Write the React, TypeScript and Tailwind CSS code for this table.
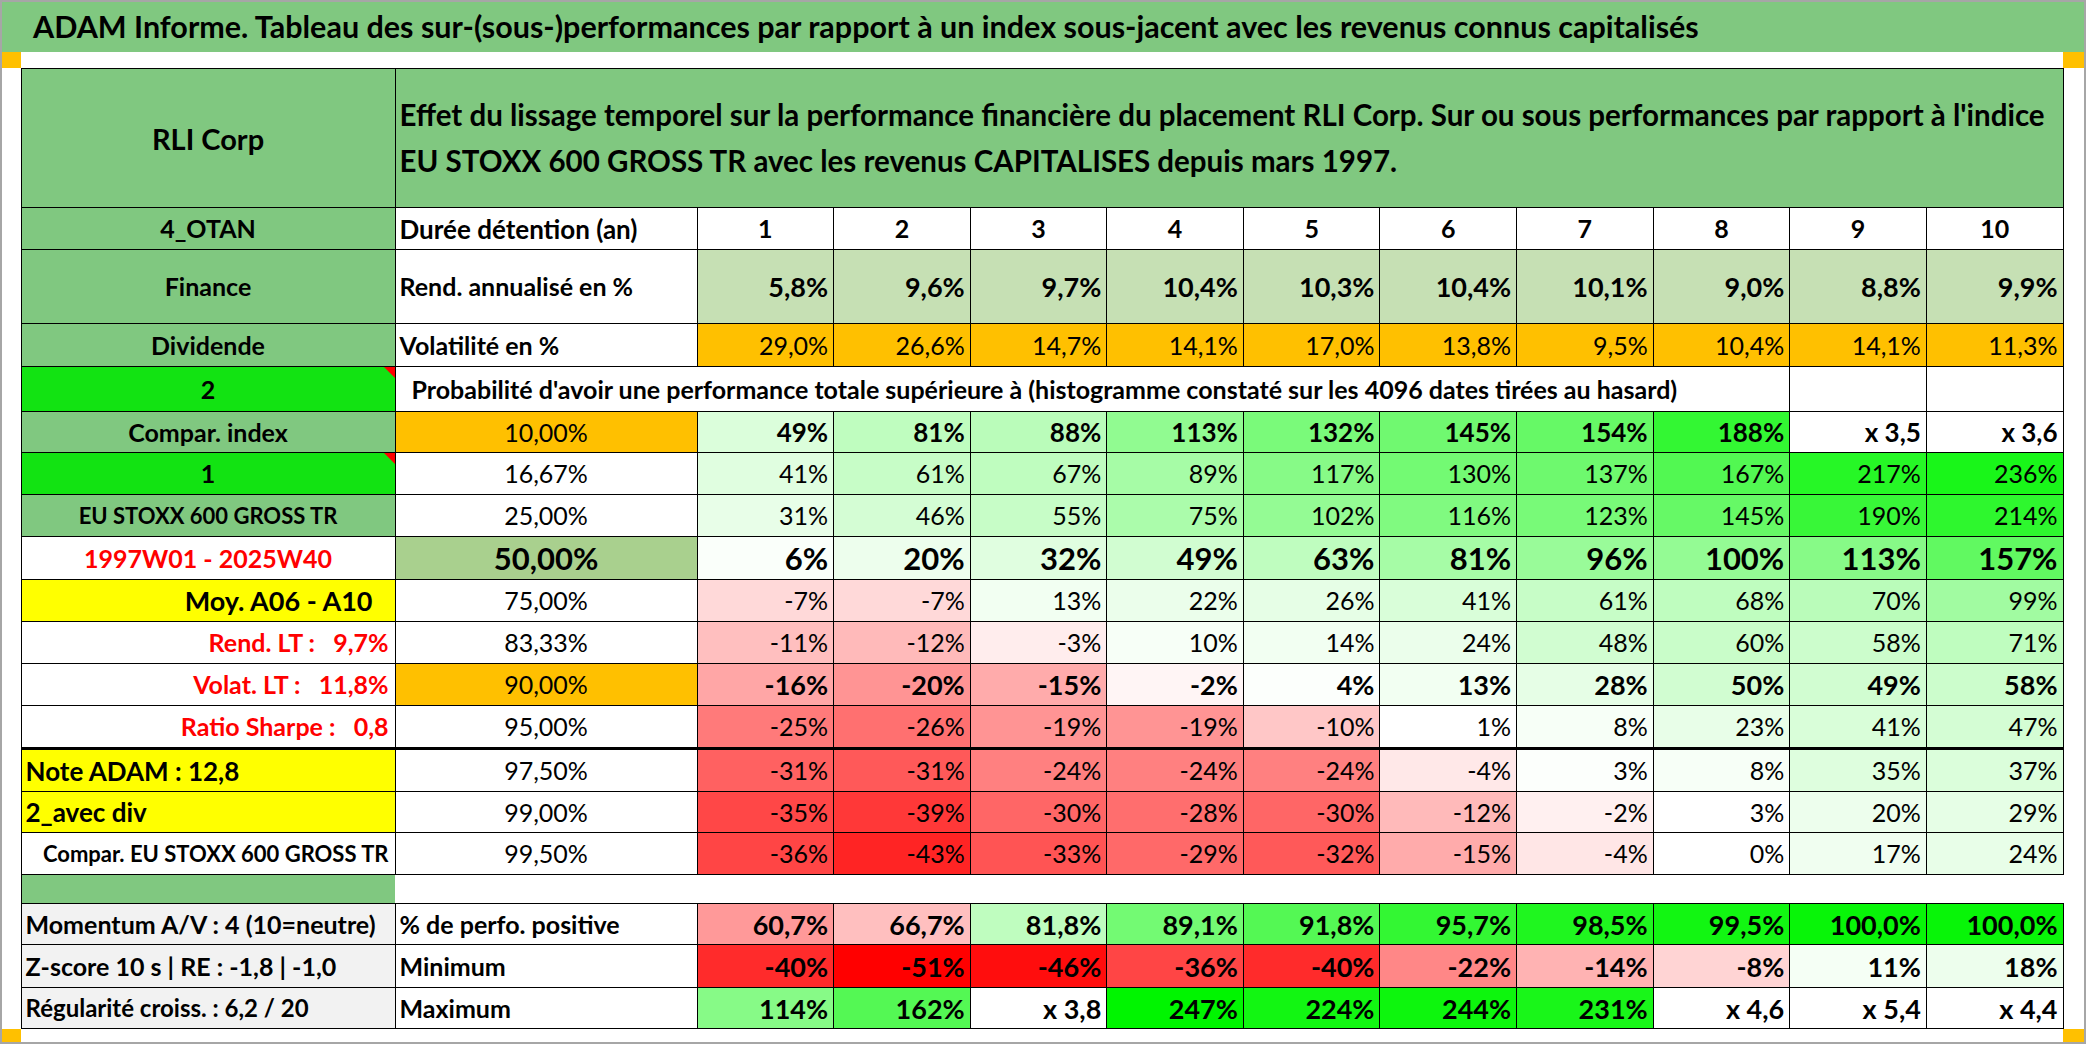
import React from "react"

type Cell = [string, number]

const heat = (s: number) => {
  if (s === 0) return "#ffffff"
  if (s > 0) {
    const v = Math.round(255 * (1 - s))
    const g = Math.round(255 - 10 * s)
    return `rgb(${v},${g},${v})`
  }
  const v = Math.round(255 * (1 + s))
  return `rgb(255,${v},${v})`
}

const rend = ["5,8%", "9,6%", "9,7%", "10,4%", "10,3%", "10,4%", "10,1%", "9,0%", "8,8%", "9,9%"]
const vol = ["29,0%", "26,6%", "14,7%", "14,1%", "17,0%", "13,8%", "9,5%", "10,4%", "14,1%", "11,3%"]

type Row = {
  a: string
  aCls: string
  b: string
  bCls: string
  vals: Cell[]
  vCls: string
  h: string
  tri?: boolean
  thick?: boolean
}

const rows: Row[] = [
  {
    a: "Compar. index",
    aCls: "bg-[#80c880] text-center font-bold text-[25px]",
    b: "10,00%",
    bCls: "bg-[#ffc000] text-center text-[25px]",
    vals: [["49%", 0.14], ["81%", 0.25], ["88%", 0.27], ["113%", 0.43], ["132%", 0.52], ["145%", 0.56], ["154%", 0.6], ["188%", 0.8], ["x 3,5", 0], ["x 3,6", 0]],
    vCls: "font-bold text-[26px]",
    h: "h-[41px]",
  },
  {
    a: "1",
    aCls: "bg-[#12e312] text-center font-bold text-[25px]",
    b: "16,67%",
    bCls: "bg-white text-center text-[25px]",
    vals: [["41%", 0.12], ["61%", 0.22], ["67%", 0.25], ["89%", 0.35], ["117%", 0.47], ["130%", 0.55], ["137%", 0.57], ["167%", 0.68], ["217%", 0.85], ["236%", 0.9]],
    vCls: "text-[25px]",
    h: "h-[42px]",
    tri: true,
  },
  {
    a: "EU STOXX 600 GROSS TR",
    aCls: "bg-[#80c880] text-center font-bold text-[22px]",
    b: "25,00%",
    bCls: "bg-white text-center text-[25px]",
    vals: [["31%", 0.09], ["46%", 0.17], ["55%", 0.22], ["75%", 0.33], ["102%", 0.42], ["116%", 0.5], ["123%", 0.53], ["145%", 0.6], ["190%", 0.78], ["214%", 0.82]],
    vCls: "text-[25px]",
    h: "h-[42px]",
  },
  {
    a: "1997W01 - 2025W40",
    aCls: "bg-white text-center font-bold text-[25px] text-[#ff0000]",
    b: "50,00%",
    bCls: "bg-[#a9d08e] text-center font-bold text-[31px]",
    vals: [["6%", 0.02], ["20%", 0.07], ["32%", 0.12], ["49%", 0.18], ["63%", 0.25], ["81%", 0.35], ["96%", 0.4], ["100%", 0.42], ["113%", 0.47], ["157%", 0.62]],
    vCls: "font-bold text-[31px]",
    h: "h-[43px]",
  },
  {
    a: "Moy. A06 - A10",
    aCls: "bg-[#ffff00] text-right pr-[22px] font-bold text-[27px]",
    b: "75,00%",
    bCls: "bg-white text-center text-[25px]",
    vals: [["-7%", -0.15], ["-7%", -0.15], ["13%", 0.05], ["22%", 0.08], ["26%", 0.1], ["41%", 0.15], ["61%", 0.22], ["68%", 0.25], ["70%", 0.27], ["99%", 0.37]],
    vCls: "text-[25px]",
    h: "h-[42px]",
  },
  {
    a: "Rend. LT :   9,7%",
    aCls: "bg-white text-right pr-[6px] font-bold text-[25px] text-[#ff0000] whitespace-pre",
    b: "83,33%",
    bCls: "bg-white text-center text-[25px]",
    vals: [["-11%", -0.25], ["-12%", -0.27], ["-3%", -0.07], ["10%", 0.03], ["14%", 0.05], ["24%", 0.08], ["48%", 0.18], ["60%", 0.21], ["58%", 0.2], ["71%", 0.25]],
    vCls: "text-[25px]",
    h: "h-[42px]",
  },
  {
    a: "Volat. LT :   11,8%",
    aCls: "bg-white text-right pr-[6px] font-bold text-[25px] text-[#ff0000] whitespace-pre",
    b: "90,00%",
    bCls: "bg-[#ffc000] text-center text-[25px]",
    vals: [["-16%", -0.35], ["-20%", -0.42], ["-15%", -0.33], ["-2%", -0.04], ["4%", 0.01], ["13%", 0.05], ["28%", 0.1], ["50%", 0.18], ["49%", 0.18], ["58%", 0.2]],
    vCls: "font-bold text-[27px]",
    h: "h-[42px]",
  },
  {
    a: "Ratio Sharpe :   0,8",
    aCls: "bg-white text-right pr-[6px] font-bold text-[25px] text-[#ff0000] whitespace-pre",
    b: "95,00%",
    bCls: "bg-white text-center text-[25px]",
    vals: [["-25%", -0.52], ["-26%", -0.56], ["-19%", -0.42], ["-19%", -0.42], ["-10%", -0.22], ["1%", 0], ["8%", 0.03], ["23%", 0.09], ["41%", 0.15], ["47%", 0.17]],
    vCls: "text-[25px]",
    h: "h-[43px]",
    thick: true,
  },
  {
    a: "Note ADAM : 12,8",
    aCls: "bg-[#ffff00] text-left pl-[4px] font-bold text-[26px]",
    b: "97,50%",
    bCls: "bg-white text-center text-[25px]",
    vals: [["-31%", -0.62], ["-31%", -0.65], ["-24%", -0.5], ["-24%", -0.5], ["-24%", -0.5], ["-4%", -0.09], ["3%", 0.01], ["8%", 0.03], ["35%", 0.13], ["37%", 0.14]],
    vCls: "text-[25px]",
    h: "h-[43px]",
  },
  {
    a: "2_avec div",
    aCls: "bg-[#ffff00] text-left pl-[4px] font-bold text-[26px]",
    b: "99,00%",
    bCls: "bg-white text-center text-[25px]",
    vals: [["-35%", -0.72], ["-39%", -0.78], ["-30%", -0.6], ["-28%", -0.57], ["-30%", -0.6], ["-12%", -0.27], ["-2%", -0.06], ["3%", 0], ["20%", 0.07], ["29%", 0.1]],
    vCls: "text-[25px]",
    h: "h-[41px]",
  },
  {
    a: "Compar. EU STOXX 600 GROSS TR",
    aCls: "bg-white text-right pr-[6px] font-bold text-[22px]",
    b: "99,50%",
    bCls: "bg-white text-center text-[25px]",
    vals: [["-36%", -0.73], ["-43%", -0.86], ["-33%", -0.67], ["-29%", -0.59], ["-32%", -0.65], ["-15%", -0.33], ["-4%", -0.1], ["0%", 0], ["17%", 0.06], ["24%", 0.09]],
    vCls: "text-[25px]",
    h: "h-[42px]",
  },
]

const bottom: Row[] = [
  {
    a: "Momentum A/V : 4 (10=neutre)",
    aCls: "bg-[#f2f2f2] text-left pl-[4px] font-bold text-[25px]",
    b: "% de perfo. positive",
    bCls: "bg-white text-left pl-[4px] font-bold text-[25px]",
    vals: [["60,7%", -0.4], ["66,7%", -0.25], ["81,8%", 0.25], ["89,1%", 0.55], ["91,8%", 0.67], ["95,7%", 0.8], ["98,5%", 0.88], ["99,5%", 0.93], ["100,0%", 0.97], ["100,0%", 0.97]],
    vCls: "font-bold text-[27px]",
    h: "h-[41px]",
  },
  {
    a: "Z-score 10 s | RE : -1,8 | -1,0",
    aCls: "bg-[#f2f2f2] text-left pl-[4px] font-bold text-[25px]",
    b: "Minimum",
    bCls: "bg-white text-left pl-[4px] font-bold text-[25px]",
    vals: [["-40%", -0.83], ["-51%", -1], ["-46%", -0.95], ["-36%", -0.73], ["-40%", -0.83], ["-22%", -0.47], ["-14%", -0.3], ["-8%", -0.17], ["11%", 0.04], ["18%", 0.07]],
    vCls: "font-bold text-[27px]",
    h: "h-[43px]",
  },
  {
    a: "Régularité croiss. : 6,2 / 20",
    aCls: "bg-[#f2f2f2] text-left pl-[4px] font-bold text-[24px]",
    b: "Maximum",
    bCls: "bg-white text-left pl-[4px] font-bold text-[25px]",
    vals: [["114%", 0.47], ["162%", 0.67], ["x 3,8", 0], ["247%", 1], ["224%", 0.93], ["244%", 0.95], ["231%", 0.9], ["x 4,6", 0], ["x 5,4", 0], ["x 4,4", 0]],
    vCls: "font-bold text-[27px]",
    h: "h-[41px]",
  },
]

const td = "border border-black p-0 align-middle leading-none"

function Triangle() {
  return <span className="absolute top-0 right-0 w-0 h-0 border-t-[11px] border-t-[#ff0000] border-l-[11px] border-l-transparent" />
}

function DataRow({ r }: { r: Row }) {
  const bb = r.thick ? "border-b-[3px]" : ""
  return (
    <tr className={r.h}>
      <td className={`${td} ${bb} ${r.aCls} relative`}>
        {r.a}
        {r.tri && <Triangle />}
      </td>
      <td className={`${td} ${bb} ${r.bCls}`}>{r.b}</td>
      {r.vals.map(([v, s], i) => (
        <td key={i} className={`${td} ${bb} ${r.vCls} text-right pr-[5px]`} style={{ backgroundColor: heat(s) }}>
          {v}
        </td>
      ))}
    </tr>
  )
}

export default function App() {
  return (
    <div className="w-[2086px] h-[1044px] border-2 border-[#a6a6a6] bg-white text-black font-['Lato','Liberation_Sans',sans-serif] overflow-hidden">
      <div className="h-[50px] bg-[#80c880] flex items-center pl-[31px] text-[30.5px] font-bold whitespace-nowrap">
        ADAM Informe. Tableau des sur-(sous-)performances par rapport à un index sous-jacent avec les revenus connus capitalisés
      </div>
      <div className="flex h-[16px]">
        <div className="w-[19px] bg-[#ffc000]" />
        <div className="flex-1" />
        <div className="w-[21px] bg-[#ffc000]" />
      </div>
      <div className="flex">
        <div className="w-[19px]" />
        <table className="table-fixed border-collapse w-[2042px]">
          <colgroup>
            <col className="w-[374px]" />
            <col className="w-[302px]" />
            {Array.from({ length: 10 }).map((_, i) => (
              <col key={i} className="w-[136.6px]" />
            ))}
          </colgroup>
          <tbody>
            <tr className="h-[139px]">
              <td className={`${td} bg-[#80c880] text-center font-bold text-[29px]`}>RLI Corp</td>
              <td colSpan={11} className={`${td} bg-[#80c880] text-left pl-[4px] font-bold text-[29.5px] !leading-[46px] whitespace-nowrap`}>
                Effet du lissage temporel sur la performance financière du placement RLI Corp. Sur ou sous performances par rapport à l'indice
                <br />
                EU STOXX 600 GROSS TR avec les revenus CAPITALISES depuis mars 1997.
              </td>
            </tr>
            <tr className="h-[42px]">
              <td className={`${td} bg-[#80c880] text-center font-bold text-[25px]`}>4_OTAN</td>
              <td className={`${td} bg-white text-left pl-[4px] font-bold text-[26px]`}>Durée détention (an)</td>
              {Array.from({ length: 10 }).map((_, i) => (
                <td key={i} className={`${td} bg-white text-center font-bold text-[25px]`}>
                  {i + 1}
                </td>
              ))}
            </tr>
            <tr className="h-[74px]">
              <td className={`${td} bg-[#80c880] text-center font-bold text-[25px]`}>Finance</td>
              <td className={`${td} bg-white text-left pl-[4px] font-bold text-[25px]`}>Rend. annualisé en %</td>
              {rend.map((v, i) => (
                <td key={i} className={`${td} bg-[#c6e0b4] text-right pr-[5px] font-bold text-[27px]`}>
                  {v}
                </td>
              ))}
            </tr>
            <tr className="h-[43px]">
              <td className={`${td} bg-[#80c880] text-center font-bold text-[25px]`}>Dividende</td>
              <td className={`${td} bg-white text-left pl-[4px] font-bold text-[25px]`}>Volatilité en %</td>
              {vol.map((v, i) => (
                <td key={i} className={`${td} bg-[#ffc000] text-right pr-[5px] text-[25px]`}>
                  {v}
                </td>
              ))}
            </tr>
            <tr className="h-[45px]">
              <td className={`${td} bg-[#12e312] text-center font-bold text-[25px] relative`}>
                2
                <Triangle />
              </td>
              <td colSpan={9} className={`${td} bg-white text-left pl-[16px] font-bold text-[25px] whitespace-nowrap`}>
                Probabilité d'avoir une performance totale supérieure à (histogramme constaté sur les 4096 dates tirées au hasard)
              </td>
              <td className={`${td} bg-white`} />
              <td className={`${td} bg-white`} />
            </tr>
            {rows.map((r, i) => (
              <DataRow key={i} r={r} />
            ))}
            <tr className="h-[29px]">
              <td className="p-0 border-l border-black bg-[#80c880]" />
              <td colSpan={11} className="p-0 border-0" />
            </tr>
            {bottom.map((r, i) => (
              <DataRow key={i} r={r} />
            ))}
          </tbody>
        </table>
        <div className="w-[21px]" />
      </div>
      <div className="flex h-[14px]">
        <div className="w-[19px] bg-[#ffc000]" />
        <div className="flex-1" />
        <div className="w-[21px] bg-[#ffc000]" />
      </div>
    </div>
  )
}
